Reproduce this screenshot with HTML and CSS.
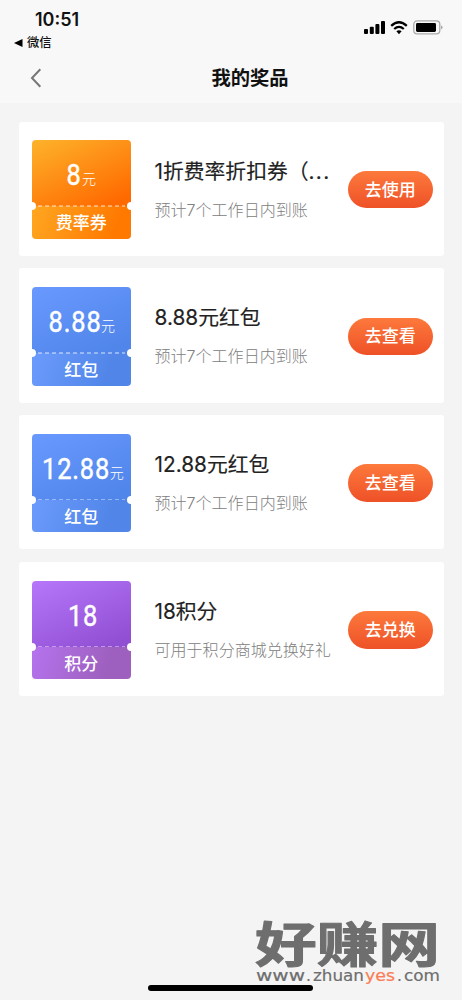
FILE: index.html
```html
<!DOCTYPE html>
<html lang="zh-CN">
<head>
<meta charset="utf-8">
<title>我的奖品</title>
<link rel="stylesheet" href="styles.css">
</head>
<body>
<div class="screen">
  <header class="top">
    <div class="status">
      <div class="clock">10:51</div>
      <svg class="indicators" width="80" height="16" viewBox="0 0 80 16">
        <rect x="1" y="9" width="4" height="5" rx="1"/>
        <rect x="6.8" y="6.8" width="4" height="7.2" rx="1"/>
        <rect x="12.4" y="4" width="4" height="10" rx="1"/>
        <rect x="18" y="1" width="4" height="13" rx="1"/>
        <g fill="none" stroke="#000" stroke-width="2.3">
          <path d="M28.2 5.8Q36 -1.3 43.8 5.8"/>
          <path d="M31.2 9Q36 4.8 40.8 9"/>
        </g>
        <path d="M33.4 11.3Q36 9.3 38.6 11.3L36 14.2Z"/>
        <rect x="50.8" y=".9" width="26" height="13" rx="3.4" fill="none" stroke="#aaa" stroke-width="1.3"/>
        <rect x="53" y="3" width="20" height="9" rx="1.4"/>
        <path d="M78.2 5.2q2.6 2.2 0 4.4z" fill="#999"/>
      </svg>
    </div>
    <div class="return"><svg width="9" height="8" viewBox="0 0 9 8"><path d="M0 4 8.5 0V8Z"/></svg><span>微信</span></div>
    <nav class="nav">
      <svg class="back" width="12" height="20" viewBox="0 0 12 20"><path d="M10.3 1.3 2 10l8.3 8.7"/></svg>
      <h1>我的奖品</h1>
    </nav>
  </header>
  <main class="prizes">
    <section class="card">
      <div class="coupon orange">
        <div class="value"><b>8</b><i>元</i></div>
        <div class="kind">费率券</div>
      </div>
      <div class="info"><h2>1折费率折扣券（<span class="dots">...</span></h2><p>预计7个工作日内到账</p></div>
      <button class="action">去使用</button>
    </section>
    <section class="card">
      <div class="coupon blue">
        <div class="value"><b>8.88</b><i>元</i></div>
        <div class="kind">红包</div>
      </div>
      <div class="info"><h2>8.88元红包</h2><p>预计7个工作日内到账</p></div>
      <button class="action">去查看</button>
    </section>
    <section class="card">
      <div class="coupon blue">
        <div class="value"><b>12.88</b><i>元</i></div>
        <div class="kind">红包</div>
      </div>
      <div class="info"><h2>12.88元红包</h2><p>预计7个工作日内到账</p></div>
      <button class="action">去查看</button>
    </section>
    <section class="card">
      <div class="coupon purple">
        <div class="value"><b>18</b></div>
        <div class="kind">积分</div>
      </div>
      <div class="info"><h2>18积分</h2><p>可用于积分商城兑换好礼</p></div>
      <button class="action">去兑换</button>
    </section>
  </main>
  <div class="home-bar"></div>
  <svg class="watermark" width="212" height="100" viewBox="0 0 212 100">
    <text class="wm-name" x="5" y="62" textLength="185" lengthAdjust="spacingAndGlyphs">好赚网</text>
    <text class="wm-url" x="6" y="81" textLength="49" lengthAdjust="spacingAndGlyphs">www</text>
    <text class="wm-url" x="56" y="81">.</text>
    <text class="wm-url" x="63" y="81" textLength="51" lengthAdjust="spacingAndGlyphs">zhuan</text>
    <text class="wm-url wm-accent" x="115" y="81" textLength="30" lengthAdjust="spacingAndGlyphs">yes</text>
    <text class="wm-url" x="147" y="81">.</text>
    <text class="wm-url" x="154" y="81" textLength="36" lengthAdjust="spacingAndGlyphs">com</text>
  </svg>
</div>
</body>
</html>
```
FILE: styles.css
```css
* { box-sizing: border-box; }
body, h1, h2, p { margin: 0; }
body { background: #f4f4f4; font-family: Inter, "Noto Sans CJK SC", sans-serif; }
.screen { position: relative; height: 1000px; overflow: hidden; }
.top { height: 103px; background: #f8f8f8; }
.status { display: flex; justify-content: space-between; height: 35px; padding: 10px 19px 0 35px; }
.clock { font-size: 18px; line-height: 20px; font-weight: 600; color: #111; }
.indicators { margin-top: 10px; }
.return { display: flex; align-items: center; gap: 4px; height: 16px; padding-left: 14px; font-size: 12.3px; line-height: 16px; font-weight: 500; color: #111; }
.nav { display: grid; grid-template-columns: 181.5px auto 1fr; align-items: center; height: 54px; padding-left: 30px; }
.nav h1 { font-size: 19.3px; line-height: 28px; font-weight: 700; color: #111; }
.back { fill: none; stroke: #777; stroke-width: 2; }
.prizes { display: flex; flex-direction: column; gap: 12.4px; padding: 18.6px 18px 0 19px; }
.card { display: flex; align-items: center; height: 134.3px; padding: 2px 11.5px 0 13px; border-radius: 3px; background: #fff; }
.coupon { flex: none; position: relative; width: 98.5px; height: 98.5px; border-radius: 4px; overflow: hidden; color: #fff; }
.coupon::before, .coupon::after { content: ""; position: absolute; z-index: 1; top: 62px; width: 8px; height: 8px; border-radius: 50%; background: #fff; }
.coupon::before { left: -4px; }
.coupon::after { right: -4px; }
.value { display: flex; justify-content: center; align-items: baseline; height: 66px; padding-top: 18px; line-height: 34px; }
.value b { margin-left: -8%; font: 400 29.5px/34px Roboto, sans-serif; letter-spacing: 1px; transform: scaleX(.86); transform-origin: right; -webkit-text-stroke: .5px #fff; }
.value i { font: 300 14px/20px "Noto Sans CJK SC", sans-serif; transform: translateY(-1.5px); }
.orange .value b, .purple .value b { margin-left: -2px; }
.kind { position: relative; height: 32.5px; font-size: 17px; line-height: 35px; font-weight: 500; text-align: center; }
.kind::before { content: ""; position: absolute; left: 6px; right: 6px; top: -1px; height: 1.4px; background: repeating-linear-gradient(90deg, rgba(255,255,255,.4) 0 4px, transparent 4px 7px); }
.orange .value { background: linear-gradient(155deg, #fdb32b, #ff6a00 90%); }
.orange .kind { background: linear-gradient(110deg, #ffa722, #ff7800 85%); }
.blue .value { background: linear-gradient(155deg, #6999ff, #5085e9 90%); }
.blue .kind { background: linear-gradient(110deg, #6b9bfd, #5186e8 75%); }
.purple .value { background: linear-gradient(155deg, #b777fa, #9150d3 90%); }
.purple .kind { background: linear-gradient(110deg, #b573ee, #9e60be 75%); }
.info { flex: 1; min-width: 0; padding: 0 0 1px 24px; white-space: nowrap; }
.info h2 { font-size: 20.8px; line-height: 30px; font-weight: 400; color: #222; -webkit-text-stroke: .15px #222; }
.dots { letter-spacing: 1.3px; }
.info p { margin-top: 11px; font-size: 16.05px; line-height: 24px; font-weight: 300; color: #808080; }
.action { flex: none; width: 84.5px; height: 37.5px; padding: 0 0 2px; border: 0; border-radius: 19px; background: linear-gradient(#fd793c, #ee5127); color: #fff; font: 500 17px/30px "Noto Sans CJK SC", sans-serif; }
.home-bar { position: absolute; left: 148px; top: 985px; width: 165px; height: 6px; border-radius: 3px; background: #000; }
.watermark { position: absolute; left: 250px; top: 900px; fill: #6e6e6e; }
.wm-name { font: 700 48px "Noto Sans CJK SC", sans-serif; stroke: #6e6e6e; stroke-width: 1; stroke-linejoin: round; }
.wm-url { font: 400 15.5px "DejaVu Sans", sans-serif; stroke: #6e6e6e; stroke-width: .2; }
.wm-accent { fill: #fb7c56; stroke: #fb7c56; }
```
